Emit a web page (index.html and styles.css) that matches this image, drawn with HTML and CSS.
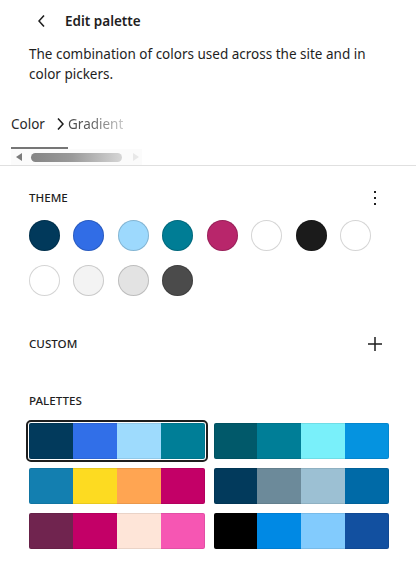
FILE: index.html
```html
<!DOCTYPE html>
<html lang="en">
<head>
<meta charset="utf-8">
<title>Edit palette</title>
<link rel="stylesheet" href="styles.css">
</head>
<body>
<div class="panel">
  <div class="header">
    <svg class="icon" viewBox="0 0 24 24" width="24" height="24" aria-hidden="true"><path d="M14.6 7l-1.2-1L8 12l5.4 6 1.2-1-4.6-5z"/></svg>
    <h2 class="title">Edit palette</h2>
  </div>
  <p class="desc">The combination of colors used across the site and in color pickers.</p>

  <div class="tabs">
    <div class="tab tab-active">Color</div>
    <div class="tab tab-faded">Gradient</div>
    <svg class="tabs-chevron" viewBox="0 0 24 24" width="24" height="24" aria-hidden="true"><path d="M10.6 6L9.4 7l4.6 5-4.6 5 1.2 1 5.4-6z"/></svg>
  </div>
  <div class="scrollbar">
    <span class="sb-left"></span>
    <span class="sb-thumb"></span>
    <span class="sb-right"></span>
  </div>

  <div class="section">
    <div class="section-head">
      <span class="label">Theme</span>
      <svg class="icon icon-right" viewBox="0 0 24 24" width="24" height="24" aria-hidden="true"><path d="M13 19h-2v-2h2v2zm0-6h-2v-2h2v2zm0-6h-2V5h2v2z"/></svg>
    </div>
    <div class="swatches">
      <span class="swatch" style="background:#01395b"></span>
      <span class="swatch" style="background:#316de6"></span>
      <span class="swatch" style="background:#9dd9fd"></span>
      <span class="swatch" style="background:#007d95"></span>
      <span class="swatch" style="background:#b8266b"></span>
      <span class="swatch" style="background:#ffffff"></span>
      <span class="swatch" style="background:#1b1b1b"></span>
      <span class="swatch" style="background:#ffffff"></span>
      <span class="swatch" style="background:#ffffff"></span>
      <span class="swatch" style="background:#f3f3f3"></span>
      <span class="swatch" style="background:#e3e3e3"></span>
      <span class="swatch" style="background:#4b4b4b"></span>
    </div>

    <div class="section-head head-custom">
      <span class="label">Custom</span>
      <svg class="icon icon-right" viewBox="0 0 24 24" width="24" height="24" aria-hidden="true"><path d="M11.25 5h1.5v6.25H19v1.5h-6.25V19h-1.5v-6.25H5v-1.5h6.25z"/></svg>
    </div>

    <div class="section-head head-palettes">
      <span class="label">Palettes</span>
    </div>
    <div class="palettes">
      <div class="palette selected">
        <span style="background:#023a5c"></span><span style="background:#316fe8"></span><span style="background:#9edbfd"></span><span style="background:#007e97"></span>
      </div>
      <div class="palette">
        <span style="background:#01596a"></span><span style="background:#007e97"></span><span style="background:#79f0fa"></span><span style="background:#0593e0"></span>
      </div>
      <div class="palette">
        <span style="background:#137fb0"></span><span style="background:#fddb21"></span><span style="background:#ffa552"></span><span style="background:#c30067"></span>
      </div>
      <div class="palette">
        <span style="background:#023a5c"></span><span style="background:#6c8a9a"></span><span style="background:#9cc0d3"></span><span style="background:#006aa7"></span>
      </div>
      <div class="palette">
        <span style="background:#70244f"></span><span style="background:#c30067"></span><span style="background:#fee5d8"></span><span style="background:#f656b3"></span>
      </div>
      <div class="palette">
        <span style="background:#000000"></span><span style="background:#0089e4"></span><span style="background:#82cbfd"></span><span style="background:#1250a0"></span>
      </div>
    </div>
  </div>
</div>
</body>
</html>
```

FILE: styles.css
```css
html, body {
  margin: 0;
  padding: 0;
  background: #ffffff;
}

body {
  font-family: "Noto Sans", "Open Sans", sans-serif;
  color: #1e1e1e;
  width: 416px;
}

.icon {
  display: block;
  flex: none;
  fill: #1e1e1e;
}

.header {
  display: flex;
  align-items: center;
  gap: 11px;
  padding: 9px 0 0 30px;
  height: 24px;
}

.title {
  margin: 0;
  font-size: 13.5px;
  font-weight: 600;
  line-height: 24px;
}

.desc {
  margin: 11px 27px 0 29px;
  font-size: 13.5px;
  line-height: 20px;
}

.tabs {
  position: relative;
  display: flex;
  margin-top: 26px;
  padding-left: 11px;
}

.tab {
  font-size: 13.5px;
  line-height: 28px;
  padding-bottom: 11px;
  white-space: nowrap;
}

.tab-active {
  width: 57px;
  color: #2a2a2a;
  box-shadow: inset 0 -2px 0 #767676;
}

.tab-faded {
  background: linear-gradient(90deg, #4a4a4a 0%, #5a5a5a 40%, #c9c9c9 100%);
  -webkit-background-clip: text;
  background-clip: text;
  color: transparent;
}

.tabs-chevron {
  position: absolute;
  left: 47.6px;
  top: 2px;
  fill: #1e1e1e;
}

.scrollbar {
  display: flex;
  align-items: center;
  margin-left: 11px;
  width: 131px;
  height: 16px;
  background: #fbfbfb;
}

.sb-left {
  margin-left: 5px;
  width: 0;
  height: 0;
  border-top: 4px solid transparent;
  border-bottom: 4px solid transparent;
  border-right: 6px solid #7b7b7b;
}

.sb-thumb {
  margin-left: 9px;
  width: 91px;
  height: 9px;
  border-radius: 5px;
  background: linear-gradient(90deg, #858585 0%, #9a9a9a 45%, #d6d6d6 100%);
}

.sb-right {
  margin-left: 11px;
  width: 0;
  height: 0;
  border-top: 4px solid transparent;
  border-bottom: 4px solid transparent;
  border-left: 6px solid #e8e8e8;
}

.section {
  border-top: 1px solid #e0e0e0;
  padding: 20px 27px 30px 29px;
}

.section-head {
  display: flex;
  align-items: center;
  justify-content: space-between;
  height: 24px;
}

.head-custom {
  margin-top: 36px;
}

.head-palettes {
  margin-top: 33px;
}

.label {
  font-size: 11.6px;
  font-weight: 500;
  text-transform: uppercase;
  line-height: 24px;
}

.icon-right {
  margin-right: 2px;
}

.swatches {
  display: flex;
  flex-wrap: wrap;
  gap: 13.6px 13.43px;
  margin-top: 10px;
}

.swatch {
  width: 31px;
  height: 31px;
  border-radius: 50%;
  box-shadow: inset 0 0 0 1px rgba(0, 0, 0, 0.17);
}

.palettes {
  display: grid;
  grid-template-columns: 1fr 1fr;
  gap: 9px;
  margin-top: 10px;
}

.palette {
  position: relative;
  display: flex;
  height: 36px;
  border-radius: 2px;
  overflow: hidden;
}

.palette span {
  flex: 1;
}

.palette::after {
  content: "";
  position: absolute;
  inset: 0;
  border-radius: 2px;
  box-shadow: inset 0 0 0 1px rgba(0, 0, 0, 0.08);
}

.palette.selected {
  overflow: visible;
  outline: 2px solid #1e1e1e;
  outline-offset: 1px;
}

.palette.selected span:first-child {
  border-radius: 2px 0 0 2px;
}

.palette.selected span:last-child {
  border-radius: 0 2px 2px 0;
}
```
